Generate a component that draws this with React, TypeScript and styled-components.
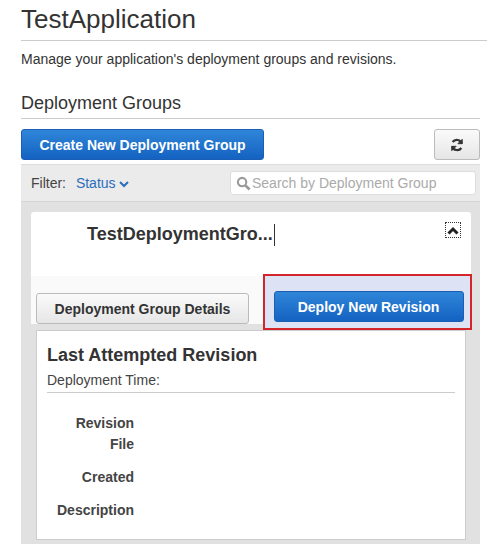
import React from 'react';
import styled, { createGlobalStyle } from 'styled-components';

const Global = createGlobalStyle`
  body { margin: 0; background: #fff; font-family: "Liberation Sans", Arial, sans-serif; color: #444; }
`;

const Page = styled.div`
  padding: 0 0 0 21px;
  width: 487px;
  box-sizing: border-box;
  overflow: hidden;
  height: 544px;
`;

const Title = styled.h1`
  margin: 0;
  padding-top: 4px;
  font-size: 26px;
  font-weight: normal;
  color: #333;
  height: 36px;
  border-bottom: 1px solid #ccc;
`;

const Sub = styled.p`
  margin: 10px 0 0;
  font-size: 14px;
  color: #333;
`;

const Section = styled.h2`
  margin: 26px 7px 0 0;
  font-size: 18px;
  font-weight: normal;
  color: #333;
  padding-bottom: 4px;
  border-bottom: 1px solid #ccc;
`;

const Toolbar = styled.div`
  display: flex;
  justify-content: space-between;
  margin: 10px 7px 0 0;
`;

const BlueBtn = styled.button<{ $w: number }>`
  width: ${p => p.$w}px;
  height: 31px;
  border: 1px solid #1a5fb4;
  border-radius: 3px;
  background: linear-gradient(#2f86d8, #1462c2);
  color: #fff;
  font: bold 14px "Liberation Sans", Arial, sans-serif;
`;

const GrayBtn = styled.button<{ $w: number }>`
  width: ${p => p.$w}px;
  height: 31px;
  border: 1px solid #bbb;
  border-radius: 3px;
  background: linear-gradient(#fafafa, #e6e6e6);
  color: #333;
  font: bold 14px "Liberation Sans", Arial, sans-serif;
  display: flex;
  align-items: center;
  justify-content: center;
`;

const Panel = styled.div`
  margin: 4px 7px 0 0;
  background: #e1e1e1;
  padding-bottom: 20px;
`;

const FilterRow = styled.div`
  display: flex;
  align-items: center;
  justify-content: space-between;
  height: 36px;
  padding: 0 4px 0 10px;
  background: #ebebeb;
  border-top: 1px solid #ddd;
  border-bottom: 1px solid #d4d4d4;
  font-size: 14px;
`;

const FilterLabel = styled.span`
  color: #444;
  span { color: #2a6ebb; margin-left: 6px; }
`;

const Search = styled.div`
  width: 246px;
  height: 24px;
  background: #fff;
  border: 1px solid #ddd;
  border-radius: 3px;
  display: flex;
  align-items: center;
  gap: 1px;
  padding-left: 5px;
  box-sizing: border-box;
  color: #aaa;
  font-size: 14px;
`;

const Body = styled.div`
  padding: 10px 9px 0 10px;
`;

const CardHead = styled.div`
  background: #fff;
  height: 64px;
  border-radius: 3px 3px 0 0;
  display: flex;
  justify-content: space-between;
  padding: 10px 10px 0 56px;
  box-sizing: border-box;
`;

const GroupName = styled.div`
  font: bold 18px "Liberation Sans", Arial, sans-serif;
  color: #333;
  margin-top: 2px;
  border-right: 1px solid #333;
  padding-right: 1px;
  height: 22px;
`;

const Chevron = styled.div`
  width: 14px;
  height: 14px;
  border: 1px dotted #333;
  display: flex;
  align-items: center;
  justify-content: center;
`;

const Actions = styled.div`
  display: flex;
  background: #fafafa;
  height: 48px;
  align-items: flex-end;
  justify-content: space-between;
  padding: 0 0 0 5px;
`;

const Highlight = styled.div`
  width: 209px;
  height: 56px;
  box-sizing: border-box;
  margin-bottom: -6px;
  margin-right: -1px;
  border: 2px solid #d3262b;
  background: #dde2f5;
  display: flex;
  align-items: center;
  justify-content: center;
  padding-top: 9px;
  padding-left: 2px;
`;

const DetailsBox = styled.div`
  background: #fff;
  border: 1px solid #ccc;
  margin: 6px 5px 0 5px;
  padding: 14px 10px 12px 10px;
  height: 182px;
`;

const BoxTitle = styled.h3`
  margin: 0;
  font-size: 18px;
  color: #333;
`;

const Time = styled.div`
  margin-top: 6px;
  font-size: 14px;
  padding-bottom: 4px;
  border-bottom: 1px solid #ccc;
`;

const Fields = styled.div`
  display: grid;
  grid-template-columns: 87px;
  row-gap: 0;
  margin-top: 20px;
`;

const Field = styled.div<{ $mt: number }>`
  text-align: right;
  font: bold 14px "Liberation Sans", Arial, sans-serif;
  margin-top: ${p => p.$mt}px;
  line-height: 21px;
`;

const NextBox = styled.div`
  background: #fff;
  border: 1px solid #ccc;
  margin: 5px 5px 0 5px;
  height: 20px;
`;

export default function App() {
  return (
    <Page>
      <Global />
      <Title>TestApplication</Title>
      <Sub>Manage your application's deployment groups and revisions.</Sub>
      <Section>Deployment Groups</Section>
      <Toolbar>
        <BlueBtn $w={243}>Create New Deployment Group</BlueBtn>
        <GrayBtn $w={46}>
          <svg width="14" height="14" viewBox="0 0 16 16" fill="none" stroke="#333" strokeWidth="2.6">
            <path d="M13.5 6.5A6 6 0 0 0 3 4.5" />
            <path d="M2.5 9.5A6 6 0 0 0 13 11.5" />
            <path d="M14 1.5v5h-5z" fill="#333" strokeWidth="1" />
            <path d="M2 14.5v-5h5z" fill="#333" strokeWidth="1" />
          </svg>
        </GrayBtn>
      </Toolbar>
      <Panel>
        <FilterRow>
          <FilterLabel>Filter: <span>Status <svg width="10" height="8" viewBox="0 0 10 8"><path d="M1 2l4 4 4-4" stroke="#2a6ebb" strokeWidth="2" fill="none" /></svg></span></FilterLabel>
          <Search>
            <svg width="15" height="15" viewBox="0 0 16 16" fill="none" stroke="#999" strokeWidth="2.2">
              <circle cx="6.5" cy="6.5" r="4.5" />
              <path d="M10 10l4.5 4.5" strokeWidth="3" />
            </svg>
            Search by Deployment Group
          </Search>
        </FilterRow>
        <Body>
          <CardHead>
            <GroupName>TestDeploymentGro...</GroupName>
            <Chevron>
              <svg width="12" height="9" viewBox="0 0 12 9"><path d="M1.5 7.5L6 3l4.5 4.5" stroke="#222" strokeWidth="3" fill="none" /></svg>
            </Chevron>
          </CardHead>
          <Actions>
            <GrayBtn $w={213}>Deployment Group Details</GrayBtn>
            <Highlight>
              <BlueBtn $w={190}>Deploy New Revision</BlueBtn>
            </Highlight>
          </Actions>
          <DetailsBox>
            <BoxTitle>Last Attempted Revision</BoxTitle>
            <Time>Deployment Time:</Time>
            <Fields>
              <Field $mt={0}>Revision<br />File</Field>
              <Field $mt={12}>Created</Field>
              <Field $mt={12}>Description</Field>
            </Fields>
          </DetailsBox>
          <NextBox />
        </Body>
      </Panel>
    </Page>
  );
}
